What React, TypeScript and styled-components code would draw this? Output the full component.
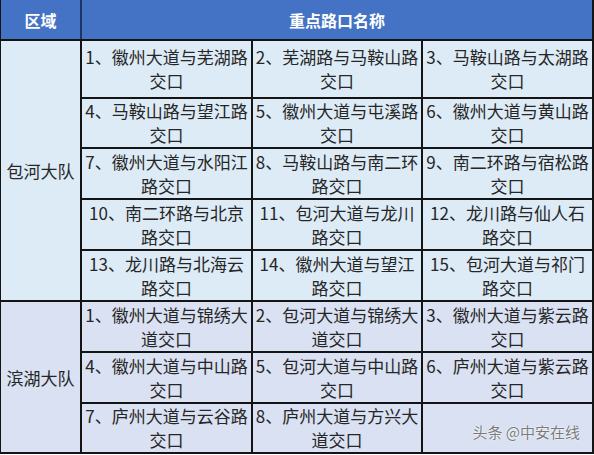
import styled, { createGlobalStyle } from "styled-components";

const teams = [
  {
    name: "包河大队",
    tone: "#DDEBF7",
    items: [
      "1、徽州大道与芜湖路交口",
      "2、芜湖路与马鞍山路交口",
      "3、马鞍山路与太湖路交口",
      "4、马鞍山路与望江路交口",
      "5、徽州大道与屯溪路交口",
      "6、徽州大道与黄山路交口",
      "7、徽州大道与水阳江路交口",
      "8、马鞍山路与南二环路交口",
      "9、南二环路与宿松路交口",
      "10、南二环路与北京路交口",
      "11、包河大道与龙川路交口",
      "12、龙川路与仙人石路交口",
      "13、龙川路与北海云路交口",
      "14、徽州大道与望江路交口",
      "15、包河大道与祁门路交口",
    ],
  },
  {
    name: "滨湖大队",
    tone: "#D9E1F2",
    items: [
      "1、徽州大道与锦绣大道交口",
      "2、包河大道与锦绣大道交口",
      "3、徽州大道与紫云路交口",
      "4、徽州大道与中山路交口",
      "5、包河大道与中山路交口",
      "6、庐州大道与紫云路交口",
      "7、庐州大道与云谷路交口",
      "8、庐州大道与方兴大道交口",
    ],
  },
];

export default function App() {
  return (
    <>
      <GlobalStyle />
      <Sheet>
        <HeadCell>区域</HeadCell>
        <HeadCell $wide>重点路口名称</HeadCell>
        {teams.map((team) => [
          <TeamCell key={team.name} $tone={team.tone} $rows={Math.ceil(team.items.length / 3)}>
            {team.name}
          </TeamCell>,
          ...team.items.map((item) => (
            <RoadCell key={team.name + item} $tone={team.tone}>
              {item}
            </RoadCell>
          )),
        ])}
        <MarkCell $tone="#D9E1F2">
          <Watermark>头条 @中安在线</Watermark>
        </MarkCell>
      </Sheet>
    </>
  );
}

const GlobalStyle = createGlobalStyle`
  body {
    margin: 0;
    background: #ffffff;
    font-family: "Noto Sans CJK SC", "Noto Sans", sans-serif;
  }
`;

const Sheet = styled.div`
  display: grid;
  width: 594px;
  box-sizing: border-box;
  grid-template-columns: 79px 169px 168px 1fr;
  grid-template-rows: 39px 56px 48px 49px 49px 49px 49px 49px 48px;
  gap: 2px;
  padding: 0 2px 2px 1px;
  background: #141414;
`;

const HeadCell = styled.div<{ $wide?: boolean }>`
  grid-column: ${(p) => (p.$wide ? "span 3" : "auto")};
  display: flex;
  align-items: center;
  justify-content: center;
  background: #4472c4;
  color: #ffffff;
  font-size: 16px;
  font-weight: bold;
  margin-left: ${(p) => (p.$wide ? "-2px" : "0")};
  margin-right: ${(p) => (p.$wide ? "0" : "0")};
  border-left: ${(p) => (p.$wide ? "2px solid #1f3463" : "none")};
`;

const TeamCell = styled.div<{ $tone: string; $rows: number }>`
  grid-row: span ${(p) => p.$rows};
  display: flex;
  align-items: center;
  justify-content: center;
  background: ${(p) => p.$tone};
  color: #262626;
  font-size: 17px;
`;

const RoadCell = styled.div<{ $tone: string }>`
  display: flex;
  align-items: center;
  justify-content: center;
  padding: 0 2px;
  background: ${(p) => p.$tone};
  color: #262626;
  font-size: 17px;
  line-height: 24px;
  text-align: center;
`;

const MarkCell = styled.div<{ $tone: string }>`
  display: flex;
  align-items: flex-end;
  justify-content: flex-end;
  padding: 0 12px 10px 0;
  background: ${(p) => p.$tone};
`;

const Watermark = styled.span`
  font-size: 15px;
  color: #7a7a7a;
  text-shadow: 0 0 2px #ffffff, 0 0 1px #ffffff;
`;
